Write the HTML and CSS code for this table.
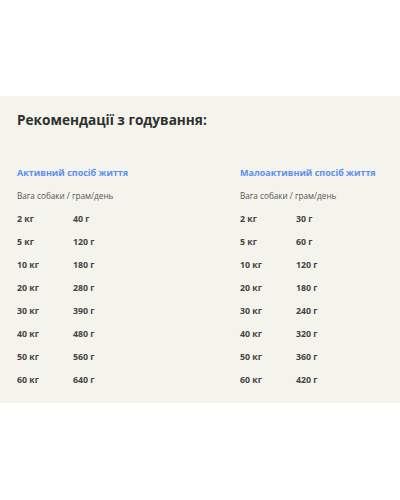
FILE: index.html
```html
<!DOCTYPE html>
<html lang="uk">
<head>
<meta charset="utf-8">
<link rel="stylesheet" href="styles.css">
</head>
<body>
<section class="feed">
  <h2 class="title">Рекомендації з годування:</h2>
  <div class="cols">
    <div class="col">
      <h3 class="head">Активний спосіб життя</h3>
      <p class="sub">Вага собаки / грам/день</p>
      <div class="row"><span class="w">2 кг</span><span>40 г</span></div>
      <div class="row"><span class="w">5 кг</span><span>120 г</span></div>
      <div class="row"><span class="w">10 кг</span><span>180 г</span></div>
      <div class="row"><span class="w">20 кг</span><span>280 г</span></div>
      <div class="row"><span class="w">30 кг</span><span>390 г</span></div>
      <div class="row"><span class="w">40 кг</span><span>480 г</span></div>
      <div class="row"><span class="w">50 кг</span><span>560 г</span></div>
      <div class="row"><span class="w">60 кг</span><span>640 г</span></div>
    </div>
    <div class="col">
      <h3 class="head">Малоактивний спосіб життя</h3>
      <p class="sub">Вага собаки / грам/день</p>
      <div class="row"><span class="w">2 кг</span><span>30 г</span></div>
      <div class="row"><span class="w">5 кг</span><span>60 г</span></div>
      <div class="row"><span class="w">10 кг</span><span>120 г</span></div>
      <div class="row"><span class="w">20 кг</span><span>180 г</span></div>
      <div class="row"><span class="w">30 кг</span><span>240 г</span></div>
      <div class="row"><span class="w">40 кг</span><span>320 г</span></div>
      <div class="row"><span class="w">50 кг</span><span>360 г</span></div>
      <div class="row"><span class="w">60 кг</span><span>420 г</span></div>
    </div>
  </div>
</section>
</body>
</html>
```
FILE: styles.css
```css
html, body {
  margin: 0;
  padding: 0;
  background: #ffffff;
  font-family: "Open Sans", "Noto Sans", sans-serif;
}
.feed {
  margin-top: 96px;
  background: #f4f4ed;
  padding: 13px 17px 16px 17px;
}
.title {
  margin: 0;
  font-size: 13.6px;
  line-height: 22px;
  font-weight: 700;
  color: #2f2f2f;
}
.cols {
  display: grid;
  grid-template-columns: 223px 1fr;
  margin-top: 35px;
}
.head {
  margin: 0;
  font-size: 9px;
  line-height: 14px;
  font-weight: 700;
  color: #5b8ff0;
  white-space: nowrap;
}
.sub {
  margin: 9px 0 0 0;
  font-size: 8.2px;
  line-height: 14px;
  color: #555555;
  white-space: nowrap;
}
.row {
  display: flex;
  font-size: 8.8px;
  line-height: 13px;
  font-weight: 700;
  color: #444444;
  margin-top: 10px;
}
.row .w {
  width: 56px;
}
```
